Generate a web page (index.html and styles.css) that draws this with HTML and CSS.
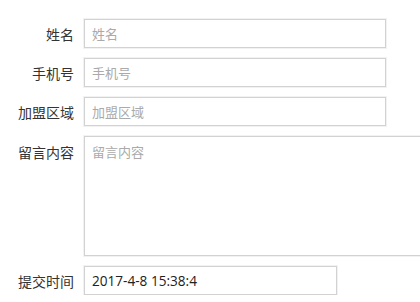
FILE: index.html
```html
<!DOCTYPE html>
<html lang="zh">
<head>
<meta charset="utf-8">
<link rel="stylesheet" href="styles.css">
</head>
<body>
<form class="form">
  <div class="row">
    <label class="label">姓名</label>
    <input class="field" type="text" placeholder="姓名">
  </div>
  <div class="row">
    <label class="label">手机号</label>
    <input class="field" type="text" placeholder="手机号">
  </div>
  <div class="row">
    <label class="label">加盟区域</label>
    <input class="field" type="text" placeholder="加盟区域">
  </div>
  <div class="row row-top">
    <label class="label label-top">留言内容</label>
    <textarea class="area" placeholder="留言内容"></textarea>
  </div>
  <div class="row">
    <label class="label">提交时间</label>
    <input class="field field-time" type="text" value="2017-4-8 15:38:4">
  </div>
</form>
</body>
</html>
```
FILE: styles.css
```css
html, body {
  margin: 0;
  padding: 0;
  background: #fff;
  overflow: hidden;
}
body {
  font-family: "Noto Sans CJK SC", "Noto Sans", sans-serif;
  color: #333;
}
.form {
  padding-top: 19px;
  display: flex;
  flex-direction: column;
  gap: 10px;
  overflow: hidden;
}
.row {
  display: flex;
  align-items: center;
  gap: 10px;
}
.row-top {
  align-items: flex-start;
}
.label {
  width: 74px;
  text-align: right;
  font-size: 14px;
  color: #333;
  flex: none;
}
.label-top {
  padding-top: 6px;
}
.field, .area {
  box-sizing: border-box;
  border: 1px solid #d2d2d2;
  box-shadow: 0 0 0 1px #f2f2f2;
  background: #fff;
  font-family: "Noto Sans CJK SC", "Noto Sans", sans-serif;
  font-size: 13px;
  color: #333;
  padding: 0 7px;
  outline: none;
  margin: 0;
  border-radius: 0;
  flex: none;
}
.field {
  width: 302px;
  height: 29px;
}
.field-time {
  width: 253px;
  font-family: "Open Sans", "Noto Sans CJK SC", sans-serif;
  font-size: 13.6px;
  color: #222;
}
.area {
  width: 350px;
  height: 120px;
  padding-top: 5px;
  resize: none;
}
.field::placeholder, .area::placeholder {
  color: #aaa;
}
```
